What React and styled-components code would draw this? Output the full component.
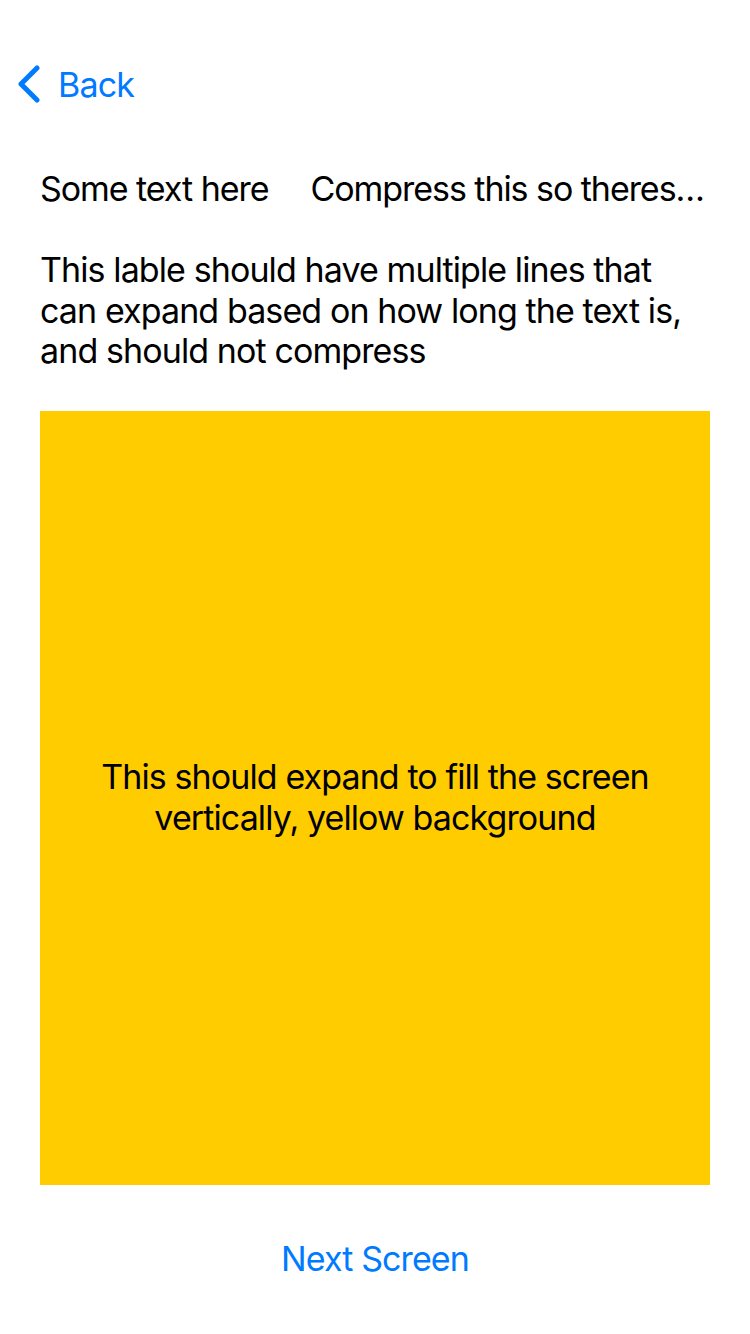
import styled, { createGlobalStyle } from "styled-components";

const GlobalStyle = createGlobalStyle`
  html, body {
    margin: 0;
    padding: 0;
    background: #ffffff;
  }
  body {
    font-family: "Inter", "Roboto", "Liberation Sans", sans-serif;
    -webkit-font-smoothing: antialiased;
  }
`;

const App = () => {
  return (
    <>
      <GlobalStyle />
      <Screen>
        <NavBar>
          <BackButton>
            <svg width="26" height="38" viewBox="0 0 26 38" fill="none">
              <path
                d="M21 3 L5 19 L21 35"
                stroke="#007AFF"
                strokeWidth="5"
                strokeLinecap="round"
                strokeLinejoin="round"
              />
            </svg>
            <span>Back</span>
          </BackButton>
        </NavBar>
        <Content>
          <Row>
            <Label $fixed>Some text here</Label>
            <Label $truncate>Compress this so theres…</Label>
          </Row>
          <Paragraph>
            This lable should have multiple lines that can expand based on how
            long the text is, and should not compress
          </Paragraph>
          <YellowPanel>
            <PanelText>
              This should expand to fill the screen
              <br />
              vertically, yellow background
            </PanelText>
          </YellowPanel>
        </Content>
        <Footer>
          <LinkButton>Next Screen</LinkButton>
        </Footer>
      </Screen>
    </>
  );
};

const Screen = styled.div`
  width: 750px;
  height: 1334px;
  display: flex;
  flex-direction: column;
  padding-top: 40px;
  box-sizing: border-box;
  color: #000;
  font-size: 34px;
  overflow: hidden;
`;

const NavBar = styled.div`
  height: 88px;
  display: flex;
  align-items: center;
  padding-left: 16px;
  flex-shrink: 0;
`;

const BackButton = styled.div`
  display: flex;
  align-items: center;
  gap: 16px;
  color: #007aff;
  font-size: 34px;
  letter-spacing: -0.8px;
  cursor: pointer;
`;

const Content = styled.div`
  flex: 1;
  display: flex;
  flex-direction: column;
  padding: 40px 40px 0 40px;
  gap: 41px;
  min-height: 0;
`;

const Row = styled.div`
  display: flex;
  align-items: center;
  gap: 42px;
  line-height: 41px;
`;

const Label = styled.span`
  letter-spacing: -1.05px;
  white-space: nowrap;
  flex-shrink: ${(p) => (p.$fixed ? 0 : 1)};
  overflow: ${(p) => (p.$truncate ? "hidden" : "visible")};
  text-overflow: ${(p) => (p.$truncate ? "ellipsis" : "clip")};
  min-width: 0;
`;

const Paragraph = styled.p`
  margin: 0;
  line-height: 40.5px;
  letter-spacing: -0.9px;
`;

const YellowPanel = styled.div`
  flex: 1;
  margin-top: -2px;
  background: #ffcc00;
  display: flex;
  align-items: center;
  justify-content: center;
`;

const PanelText = styled.div`
  text-align: center;
  line-height: 40.5px;
  letter-spacing: -0.9px;
`;

const Footer = styled.div`
  height: 149px;
  flex-shrink: 0;
  display: flex;
  justify-content: center;
  padding-top: 53px;
  box-sizing: border-box;
`;

const LinkButton = styled.div`
  color: #007aff;
  font-size: 34px;
  line-height: 41px;
  letter-spacing: -0.9px;
  cursor: pointer;
`;

export default App;
